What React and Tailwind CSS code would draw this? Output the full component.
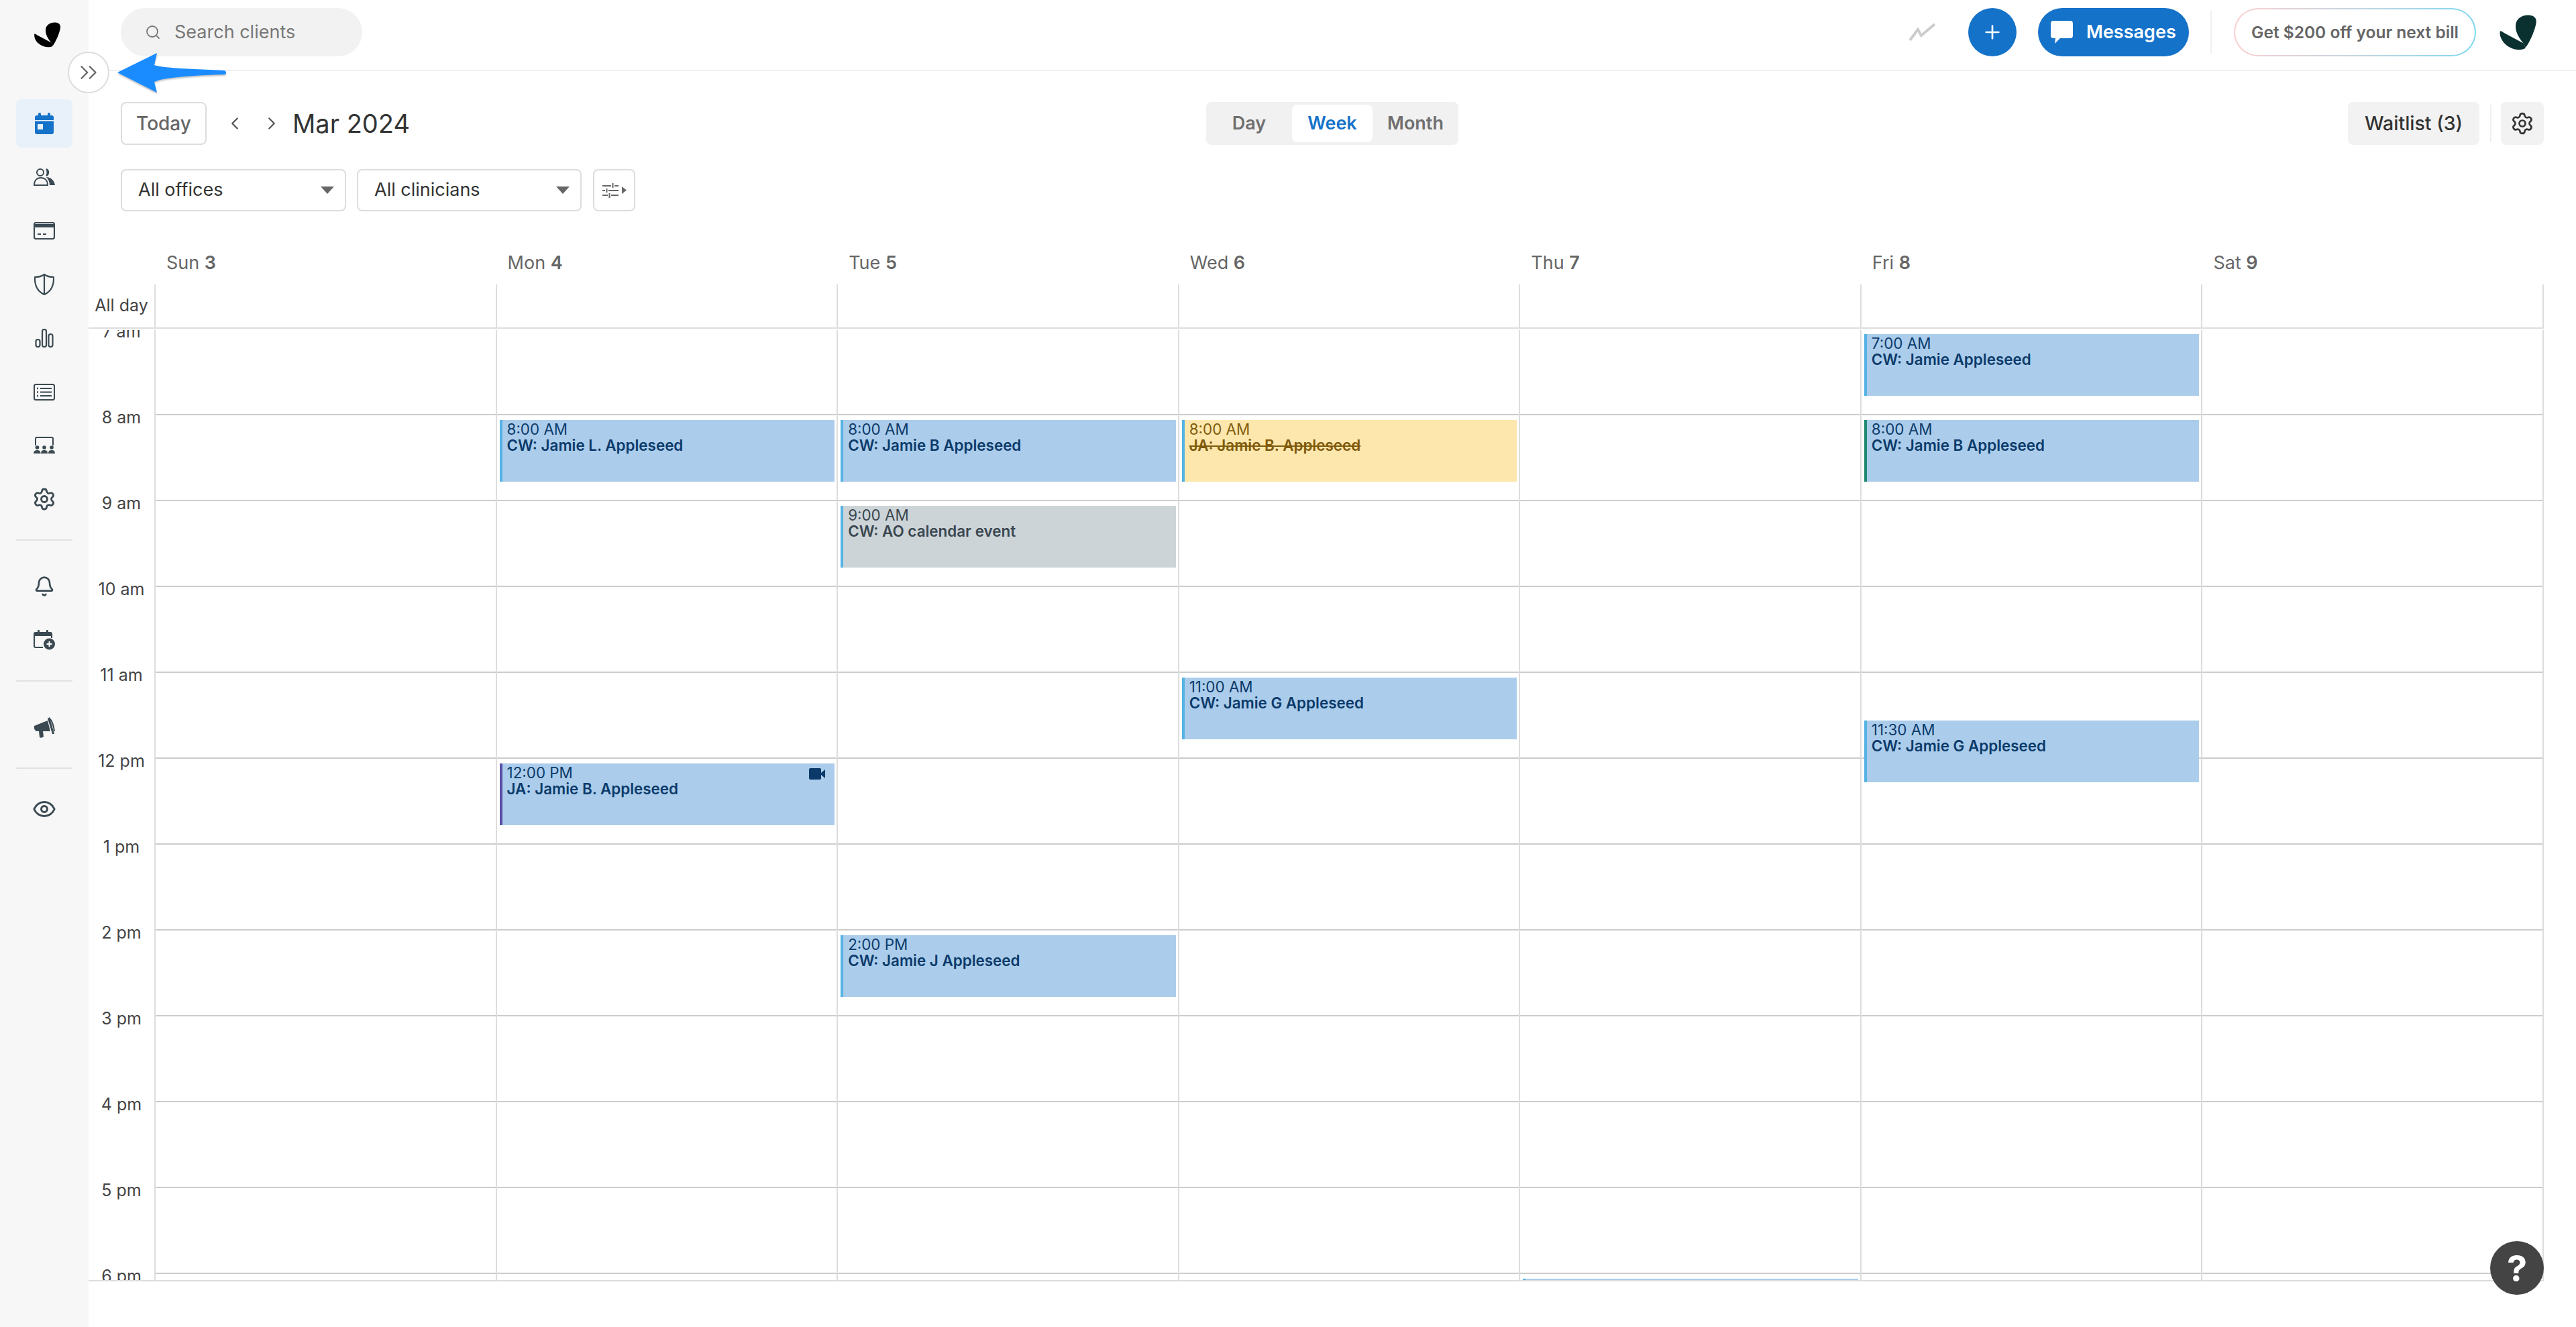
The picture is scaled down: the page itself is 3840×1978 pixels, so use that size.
import React from "react";
import { ChevronLeft, ChevronRight, ChevronsRight, Plus, Search, Settings, Bell, Eye } from "lucide-react";

const Logo = ({ className, fill }) => (
  <svg viewBox="30 28 170 162" className={className} fill={fill}>
    <path d="M138 156C110 122 100 92 106 66C112 42 140 28 166 30C190 31 201 46 198 64C193 98 170 150 150 178C147 170 143 162 138 156Z" />
    <path d="M33 104C36 100 42 104 50 110L140 158C145 165 148 172 149 180C130 192 92 190 62 166C42 150 30 126 33 104Z" />
  </svg>
);

const c = "#3b4a52";
const IconCalendar = () => (
  <svg width="28" height="32" viewBox="0 0 28 32" fill="#1572c9">
    <rect x="5" y="0" width="4" height="6" rx="1.5" />
    <rect x="19" y="0" width="4" height="6" rx="1.5" />
    <path d="M3 4H25A3 3 0 0 1 28 7V11H0V7A3 3 0 0 1 3 4Z" />
    <path fillRule="evenodd" d="M0 12.5H28V29A3 3 0 0 1 25 32H3A3 3 0 0 1 0 29ZM4 17V25H12V17Z" />
  </svg>
);
const IconPeople = () => (
  <svg width="32" height="26" viewBox="0 0 32 26" fill="none" stroke={c} strokeWidth="2">
    <circle cx="10" cy="6" r="5" />
    <path d="M1 25C1 18 5 14 11 14C17 14 21 18 21 25Z" />
    <path d="M19 1A5.5 5.5 0 0 1 19 11C21 9 21 3 19 1Z" fill={c} />
    <path d="M19 13C26 13 31 18 32 25H24C24 20 22 16 19 13Z" fill={c} stroke="none" />
  </svg>
);
const IconCard = () => (
  <svg width="32" height="26" viewBox="0 0 32 26" fill="none" stroke={c} strokeWidth="2.2">
    <rect x="1" y="1" width="30" height="24" rx="2.5" />
    <rect x="1" y="3" width="30" height="5" fill={c} stroke="none" />
    <path d="M6 18H11M14 18H19" />
  </svg>
);
const IconShield = () => (
  <svg width="30" height="32" viewBox="0 0 30 32" fill="none" stroke={c} strokeWidth="2.2" strokeLinejoin="round">
    <path d="M15 1C19 4 24 5 29 5C29.500 17 26 26 15 31C4 26 .5 17 1 5C6 5 11 4 15 1Z" />
    <path d="M15 1V31" />
  </svg>
);
const IconBars = () => (
  <svg width="28" height="28" viewBox="0 0 28 28" fill="none" stroke={c} strokeWidth="2.2">
    <rect x="1.500" y="16" width="6" height="11" rx="3" />
    <rect x="11" y="1" width="6" height="26" rx="3" />
    <rect x="20.500" y="8" width="6" height="19" rx="3" />
  </svg>
);
const IconList = () => (
  <svg width="32" height="25" viewBox="0 0 32 25" fill="none" stroke={c} strokeWidth="2">
    <rect x="1" y="1" width="30" height="23" rx="2.500" />
    <path d="M10 7H27M10 12.500H27M10 18H27" />
    <path d="M5 7H7M5 12.500H7M5 18H7" strokeWidth="2.500" />
  </svg>
);
const IconPresenter = () => (
  <svg width="32" height="26" viewBox="0 0 32 26" fill={c}>
    <path d="M3 13V3A2 2 0 0 1 5 1H27A2 2 0 0 1 29 3V13" fill="none" stroke={c} strokeWidth="2" />
    <circle cx="5.500" cy="16" r="2.800" />
    <circle cx="16" cy="16" r="2.800" />
    <circle cx="27" cy="16" r="2.800" />
    <path d="M0 25C0 21 3 20 5.500 20C8 20 10.500 21 10.500 25Z" />
    <path d="M11 25C11 21 13 20 16 20C19 20 21 21 21 25Z" />
    <path d="M22 25C22 21 24 20 27 20C30 20 32 21 32 25Z" />
  </svg>
);
const IconCalPlus = () => (
  <svg width="32" height="30" viewBox="0 0 32 30" fill="none">
    <path d="M14 26H3A2 2 0 0 1 1 24V6A2 2 0 0 1 3 4H25A2 2 0 0 1 27 6V12" stroke={c} strokeWidth="2.200" />
    <path d="M1 5H27V9H1Z" fill={c} />
    <rect x="6" y="0" width="3" height="6" rx="1" fill={c} />
    <rect x="19" y="0" width="3" height="6" rx="1" fill={c} />
    <circle cx="23.500" cy="21" r="8.500" fill={c} />
    <path d="M23.500 17V25M19.500 21H27.500" stroke="#fff" strokeWidth="2" />
  </svg>
);
const IconMegaphone = () => (
  <svg width="32" height="32" viewBox="0 0 32 32" fill={c}>
    <path d="M1 14L21 6L25 22L6 22C3 22 2 20 1 18Z" />
    <path d="M8 22L14 22L15 30C13 32 10 32 9 31Z" />
    <path d="M24 1L31 26L28 26L21 3Z" />
    <path d="M24 3C27 6 30 14 31 22" fill="none" stroke={c} strokeWidth="2" />
  </svg>
);

const Item = ({ children, active }) => (
  <div className={`mx-[24px] flex h-[72px] w-[84px] items-center justify-center rounded-lg ${active ? "bg-[#e8f1fa]" : ""}`}>
    {children}
  </div>
);

const Rule = ({ className }) => <div className={`mx-[24px] h-[2px] w-[84px] bg-[#e2e2e2] ${className}`} />;

const Sidebar = () => (
  <aside className="flex h-full w-[132px] shrink-0 flex-col bg-[#f7f7f7]">
    <div className="ml-[50px] mt-[33px] h-[38px] w-[41px]">
      <Logo className="h-[38px] w-[41px]" fill="#000" />
    </div>
    <nav className="mt-[77px] flex flex-col gap-2">
      <Item active><IconCalendar /></Item>
      <Item><IconPeople /></Item>
      <Item><IconCard /></Item>
      <Item><IconShield /></Item>
      <Item><IconBars /></Item>
      <Item><IconList /></Item>
      <Item><IconPresenter /></Item>
      <Item><Settings size={36} color={c} strokeWidth={1.9} /></Item>
    </nav>
    <Rule className="mt-[24px]" />
    <div className="mt-[32px] flex flex-col gap-2">
      <Item><Bell size={32} color={c} strokeWidth={2} /></Item>
      <Item><IconCalPlus /></Item>
    </div>
    <Rule className="mt-[24px]" />
    <div className="mt-[32px]"><Item><IconMegaphone /></Item></div>
    <Rule className="mt-[24px]" />
    <div className="mt-[24px]"><Item><Eye size={36} color={c} strokeWidth={2} /></Item></div>
  </aside>
);

const Header = () => (
  <header className="flex h-[106px] shrink-0 items-start border-b-2 border-[#f0f0f0] pl-[48px] pr-[58px] pt-[12px]">
    <div className="flex h-[72px] w-[360px] items-center rounded-full bg-[#f2f2f2] pl-[36px] text-[27px] text-[#777]">
      <Search size={24} color="#777" strokeWidth={1.800} />
      <span className="ml-[20px]">Search clients</span>
    </div>
    <div className="ml-auto flex items-center">
      <svg width="40" height="26" viewBox="0 0 40 26" fill="none" stroke="#cccccc" strokeWidth="4" strokeLinejoin="miter">
        <path d="M1 25L13 9L18 18L38 1" />
      </svg>
      <button className="ml-[48px] flex h-[72px] w-[72px] items-center justify-center rounded-full bg-[#1572c9]">
        <Plus size={32} color="#fff" strokeWidth={2} />
      </button>
      <button className="ml-[32px] flex h-[72px] w-[225px] items-center rounded-full bg-[#1572c9] pl-[19px] text-[27px] font-semibold text-white">
        <svg width="33" height="34" viewBox="0 0 33 34" fill="#fff">
          <path d="M4 0H29A4 4 0 0 1 33 4V22A4 4 0 0 1 29 26H14L6 34L7 26H4A4 4 0 0 1 0 22V4A4 4 0 0 1 4 0Z" />
        </svg>
        <span className="ml-[20px]">Messages</span>
      </button>
      <div className="ml-[32px] h-[64px] w-[2px] bg-[#f0f0f0]" />
      <div className="ml-[33px] h-[72px] w-[361px] rounded-full bg-gradient-to-r from-[#fbcfd0] to-[#7dd8ef] p-[2px]">
        <div className="flex h-full items-center justify-center rounded-full bg-white text-[24.500px] font-semibold text-[#666]">
          Get $200 off your next bill
        </div>
      </div>
      <Logo className="ml-[34px] h-[53px] w-[57px]" fill="#0a3030" />
    </div>
  </header>
);

const Select = ({ label, width }) => (
  <div className={`flex h-[63px] items-center justify-between rounded-lg border-2 border-[#dddddd] pl-[24px] pr-[16px] text-[27px] text-[#333] ${width}`}>
    <span>{label}</span>
    <svg width="20" height="11" viewBox="0 0 20 11" fill="#666"><path d="M0 0H20L10 11Z" /></svg>
  </div>
);

const Toolbar = () => (
  <>
    <div className="mt-[46px] grid h-[64px] grid-cols-[1fr_auto_1fr] items-center pl-[48px] pr-[48px]">
      <div className="flex items-center">
        <button className="flex h-[64px] w-[128px] items-center justify-center rounded-lg border-2 border-[#dddddd] text-[28px] font-medium text-[#666]">
          Today
        </button>
        <ChevronLeft className="ml-[27px]" size={30} color="#555" strokeWidth={1.800} />
        <ChevronRight className="ml-[25px]" size={30} color="#555" strokeWidth={1.800} />
        <span className="ml-[16px] text-[38px] text-[#333]">Mar 2024</span>
      </div>
      <div className="flex h-[64px] items-center gap-[4px] rounded-lg bg-[#f1f1f1] p-[4px] text-[27px] font-semibold text-[#6f6f6f]">
        <div className="flex h-[56px] w-[120px] items-center justify-center">Day</div>
        <div className="flex h-[56px] w-[120px] items-center justify-center rounded-lg bg-white text-[#1572c9]">Week</div>
        <div className="flex h-[56px] w-[120px] items-center justify-center">Month</div>
      </div>
      <div className="flex items-center justify-end">
        <button className="flex h-[64px] w-[196px] items-center justify-center rounded-lg bg-[#f2f2f2] text-[28.500px] font-medium text-[#333]">
          Waitlist (3)
        </button>
        <div className="ml-[16px] h-[56px] w-[2px] bg-[#f0f0f0]" />
        <button className="ml-[14px] flex h-[64px] w-[64px] items-center justify-center rounded-lg bg-[#f2f2f2]">
          <Settings size={36} color="#333" strokeWidth={1.800} />
        </button>
      </div>
    </div>
    <div className="mt-[36px] flex items-center pl-[48px]">
      <Select label="All offices" width="w-[336px]" />
      <div className="ml-[16px]"><Select label="All clinicians" width="w-[335px]" /></div>
      <button className="ml-[17px] flex h-[63px] w-[63px] items-center justify-center gap-[5px] rounded-lg border-2 border-[#dddddd]">
        <svg width="24" height="22" viewBox="0 0 24 22" fill="none" stroke="#666" strokeWidth="2">
          <path d="M0 4H13M18 4H24M15.500 0V7M0 11H4M9 11H24M6.500 8V14M0 18H8M13 18H24M10.500 15V22" />
        </svg>
        <svg width="7" height="11" viewBox="0 0 7 11" fill="#666"><path d="M0 0L7 5.500L0 11Z" /></svg>
      </button>
    </div>
  </>
);

const days = [
  ["Sun", "3"], ["Mon", "4"], ["Tue", "5"], ["Wed", "6"], ["Thu", "7"], ["Fri", "8"], ["Sat", "9"],
];
const hours = ["7 am", "8 am", "9 am", "10 am", "11 am", "12 pm", "1 pm", "2 pm", "3 pm", "4 pm", "5 pm", "6 pm"];

const blue = "bg-[#abcdeb] text-[#0b3a6a]";
const events = [
  { d: 1, h: 1, time: "8:00 AM", title: "CW: Jamie L. Appleseed", tone: blue, edge: "border-[#55b3e3]" },
  { d: 1, h: 5, time: "12:00 PM", title: "JA: Jamie B. Appleseed", tone: blue, edge: "border-[#5a4fa6]", video: true },
  { d: 2, h: 1, time: "8:00 AM", title: "CW: Jamie B Appleseed", tone: blue, edge: "border-[#55b3e3]" },
  { d: 2, h: 2, time: "9:00 AM", title: "CW: AO calendar event", tone: "bg-[#ccd4d8] text-[#3a4750]", edge: "border-[#55b3e3]" },
  { d: 2, h: 7, time: "2:00 PM", title: "CW: Jamie J Appleseed", tone: blue, edge: "border-[#55b3e3]" },
  { d: 3, h: 1, time: "8:00 AM", title: "JA: Jamie B. Appleseed", tone: "bg-[#fde7ad] text-[#7f5a0b]", edge: "border-[#55b3e3]", strike: true },
  { d: 3, h: 4, time: "11:00 AM", title: "CW: Jamie G Appleseed", tone: blue, edge: "border-[#55b3e3]" },
  { d: 4, h: 11, time: "", title: "", tone: blue, edge: "border-[#55b3e3]" },
  { d: 5, h: 0, time: "7:00 AM", title: "CW: Jamie Appleseed", tone: blue, edge: "border-[#55b3e3]" },
  { d: 5, h: 1, time: "8:00 AM", title: "CW: Jamie B Appleseed", tone: blue, edge: "border-[#1f8a70]" },
  { d: 5, h: 4, time: "11:30 AM", title: "CW: Jamie G Appleseed", tone: blue, edge: "border-[#55b3e3]", half: true },
];

const Event = ({ e }) => (
  <div className={`relative z-10 h-[92px] border-l-4 pl-[7px] pt-[2px] text-[22.400px] leading-[24px] ${e.tone} ${e.edge} ${e.half ? "mt-[64px]" : ""}`}>
    <div>{e.time}</div>
    <div className={`font-semibold ${e.strike ? "line-through" : ""}`}>{e.title}</div>
    {e.video && (
      <svg className="absolute right-[14px] top-[7px]" width="24" height="17" viewBox="0 0 24 17" fill="#0b3a6a">
        <rect width="18" height="17" rx="2" />
        <path d="M18 7L24 2V15L18 10Z" />
      </svg>
    )}
  </div>
);

const Calendar = () => (
  <div className="w-[3660px]">
    <div className="ml-[100px] mt-[45px] grid h-[64px] w-[3560px] grid-cols-7 items-center text-[27px] text-[#666]">
      {days.map(([n, num]) => (
        <div key={n} className="pl-[16px]">
          {n} <span className="font-semibold">{num}</span>
        </div>
      ))}
    </div>
    <div className="flex h-[66px] border-b-2 border-[#dddddd]">
      <div className="flex w-[100px] shrink-0 items-center justify-center border-r-2 border-[#dddddd] text-[25px] text-[#444]">
        All day
      </div>
      <div className="grid w-[3560px] grid-cols-7">
        {days.map(([n]) => <div key={n} className="border-r-2 border-[#dddddd]" />)}
      </div>
    </div>
    <div className="mt-[2px] h-[1416px] overflow-hidden">
      <div className="-mt-[3px] flex">
        <div className="w-[100px] shrink-0 border-r-2 border-[#dddddd]">
          {hours.map((h) => (
            <div key={h} className="flex h-[128px] items-start justify-center">
              <span className="-mt-[10px] text-[25px] leading-[30px] text-[#444]">{h}</span>
            </div>
          ))}
        </div>
        <div className="grid w-[3560px] grid-cols-7">
          {days.map(([n], d) => (
            <div key={n} className="border-r-2 border-[#dddddd]">
              {hours.map((h, i) => (
                <div key={h} className="h-[128px] border-t-2 border-[#cccccc] pl-[4px] pr-[3px] pt-[7px]">
                  {events.filter((e) => e.d === d && e.h === i).map((e) => <Event key={e.time + e.title} e={e} />)}
                </div>
              ))}
            </div>
          ))}
        </div>
      </div>
    </div>
    <div className="h-[2px] bg-[#dddddd]" />
  </div>
);

export default function App() {
  return (
    <div className="relative flex h-[1978px] w-[3840px] overflow-hidden bg-white font-['Inter',sans-serif]">
      <Sidebar />
      <main className="flex min-w-0 flex-1 flex-col">
        <Header />
        <Toolbar />
        <Calendar />
      </main>
      <div className="absolute left-[101px] top-[77px] flex h-[62px] w-[62px] items-center justify-center rounded-full border-2 border-[#dddddd] bg-white">
        <ChevronsRight size={42} color="#666" strokeWidth={1.300} />
      </div>
      <svg className="absolute left-[175px] top-[79px] drop-shadow-[0_2px_1px_rgba(0,0,0,0.25)]" width="162" height="59" viewBox="0 0 162 59" fill="#1a8cff">
        <path d="M0 29L59 0L55 18C70 23 120 24 159 26C163 27 163 32 159 32C120 33 70 36 55 43L59 59Z" />
      </svg>
      <div className="absolute left-[3712px] top-[1850px] flex h-[80px] w-[80px] items-center justify-center rounded-full bg-[#444444] text-[54px] font-bold text-white">
        ?
      </div>
    </div>
  );
}
